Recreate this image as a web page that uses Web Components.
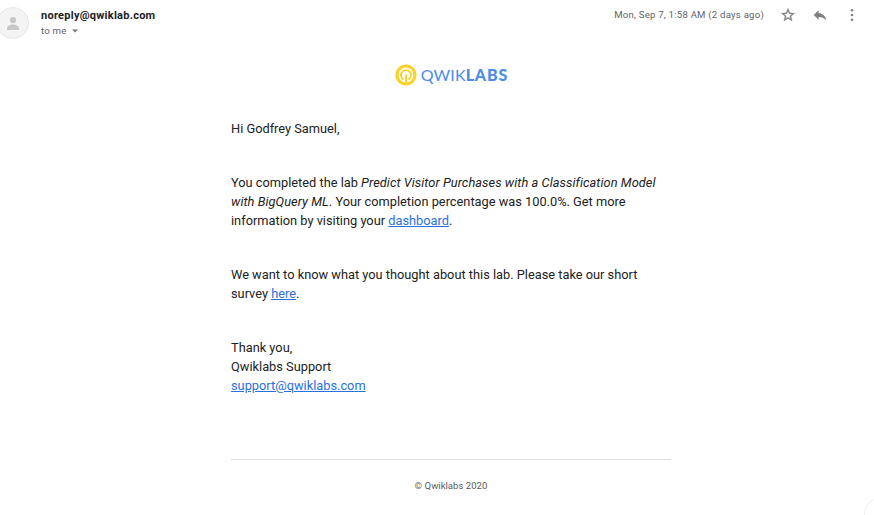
<!DOCTYPE html>
<html lang="en"><head><meta charset="utf-8"><title>Qwiklabs mail</title>
<style>html,body{margin:0;height:515px;overflow:hidden;background:#fff;font-family:Roboto,"Liberation Sans",sans-serif;color:#222}</style>
</head><body>
<mail-message></mail-message>
<script>
const define=(name,html)=>customElements.define(name,class extends HTMLElement{
  constructor(){super();this.attachShadow({mode:'open'}).innerHTML=html;}
});
define('user-avatar',`<style>:host{display:block;width:32px;height:32px;flex:none}svg{display:block}</style>
<svg width="32" height="32" viewBox="0 0 32 32"><circle cx="16" cy="16" r="15.6" fill="#f4f4f4" stroke="#e3e3e3" stroke-width=".8"/><circle cx="16" cy="13.1" r="3.1" fill="#c8c8c8"/><path d="M10 23v-1.800c0-2.400 4-3.600 6-3.600s6 1.200 6 3.600V23z" fill="#c8c8c8"/></svg>`);
define('mail-actions',`<style>:host{display:flex;align-items:center;color:#808080}svg{display:block;fill:currentColor}
.star,.reply{margin-right:16px}</style>
<svg class="star" width="16" height="16" viewBox="0 0 24 24"><path stroke="currentColor" stroke-width=".5" d="M22 9.240l-7.190-.62L12 2 9.190 8.630 2 9.240l5.460 4.730L5.820 21 12 17.270 18.180 21l-1.630-7.030L22 9.240zM12 15.400l-3.760 2.270 1-4.280-3.320-2.880 4.380-.38L12 6.100l1.710 4.040 4.380.38-3.320 2.880 1 4.280L12 15.400z"/></svg>
<svg class="reply" width="16" height="16" viewBox="0 0 24 24"><path d="M10 9V5l-7.500 7 7.500 7v-4.100c5 0 8.500 1.600 11.500 5.100-1-5-4-10-11.500-11z"/></svg>
<svg width="16" height="16" viewBox="0 0 16 16"><circle cx="8" cy="3.300" r="1.300"/><circle cx="8" cy="8" r="1.300"/><circle cx="8" cy="12.700" r="1.300"/></svg>`);
define('mail-header',`<style>:host{display:flex;height:46px;box-sizing:border-box;padding-top:7px}
user-avatar{margin-left:-3px}.who{padding:1px 0 0 12px;flex:1}
.name{font-size:11px;line-height:15px;font-weight:700;letter-spacing:.26px;color:#202124}
.to{display:flex;align-items:center;font-size:9.600px;line-height:16px;letter-spacing:.24px;color:#5f6368}
.to svg{margin-left:5px}.date{font-size:9.600px;line-height:16px;letter-spacing:.23px;color:#5f6368;margin-right:16px}
mail-actions{height:16px;margin-right:14px}</style>
<user-avatar></user-avatar><div class="who"><div class="name">noreply@qwiklab.com</div><div class="to"><span>to me</span><svg width="6" height="4" viewBox="0 0 6 4"><path d="M0 .5h6l-3 3z" fill="#777"/></svg></div></div>
<div class="date">Mon, Sep 7, 1:58 AM (2 days ago)</div><mail-actions></mail-actions>`);
define('qwiklabs-logo',`<style>:host{display:flex;align-items:center;justify-content:center;height:22px;font:16px/22px Lato,sans-serif;color:#4a8cec}svg{display:block;margin-right:4px}.word{letter-spacing:.15px}b{font-weight:900;letter-spacing:.85px;margin-right:-.85px}</style>
<svg width="22" height="22" viewBox="0 0 22 22"><circle cx="11" cy="11" r="9" fill="none" stroke="#f9d329" stroke-width="3.200"/><path d="M8.600 15.500A5 5 0 1 1 13.400 15.500" fill="none" stroke="#f9d329" stroke-width="1.900"/><path d="M10.100 10.500h1.900v9h-1.900z" fill="#f9d329"/></svg>
<span class="word">QWIK<b>LABS</b></span>`);
define('mail-link',`<style>:host{display:inline;color:#2a70e0;text-decoration:underline}</style><slot></slot>`);
define('mail-body',`<style>:host{display:block;font-size:12.800px;line-height:19px;color:#222;white-space:nowrap}p{margin:0 0 35px}i{letter-spacing:.055px}</style>
<p>Hi Godfrey Samuel,</p>
<p>You completed the lab <i>Predict Visitor Purchases with a Classification Model<br>with BigQuery ML</i>. Your completion percentage was 100.0%. Get more<br>information by visiting your <mail-link>dashboard</mail-link>.</p>
<p>We want to know what you thought about this lab. Please take our short<br>survey <mail-link>here</mail-link>.</p>
<p>Thank you,<br>Qwiklabs Support<br><mail-link>support@qwiklabs.com</mail-link></p>`);
define('mail-footer',`<style>:host{display:block;border-top:1px solid #ddd;padding-top:18px;font-size:9.600px;line-height:16px;text-align:center;color:#5c5c5c}</style>© Qwiklabs 2020`);
define('corner-button',`<style>:host{position:absolute;left:864px;top:498px;width:32px;height:32px;box-sizing:border-box;border:1px solid #eee;border-radius:50%}</style>`);
define('mail-message',`<style>:host{display:block;position:relative;width:874px;height:515px;overflow:hidden}
main{width:440px;margin-left:231px;padding-top:18px}mail-body{margin-top:33px}mail-footer{margin-top:64px}</style>
<mail-header></mail-header><main><qwiklabs-logo></qwiklabs-logo><mail-body></mail-body><mail-footer></mail-footer></main><corner-button></corner-button>`);
</script></body></html>
